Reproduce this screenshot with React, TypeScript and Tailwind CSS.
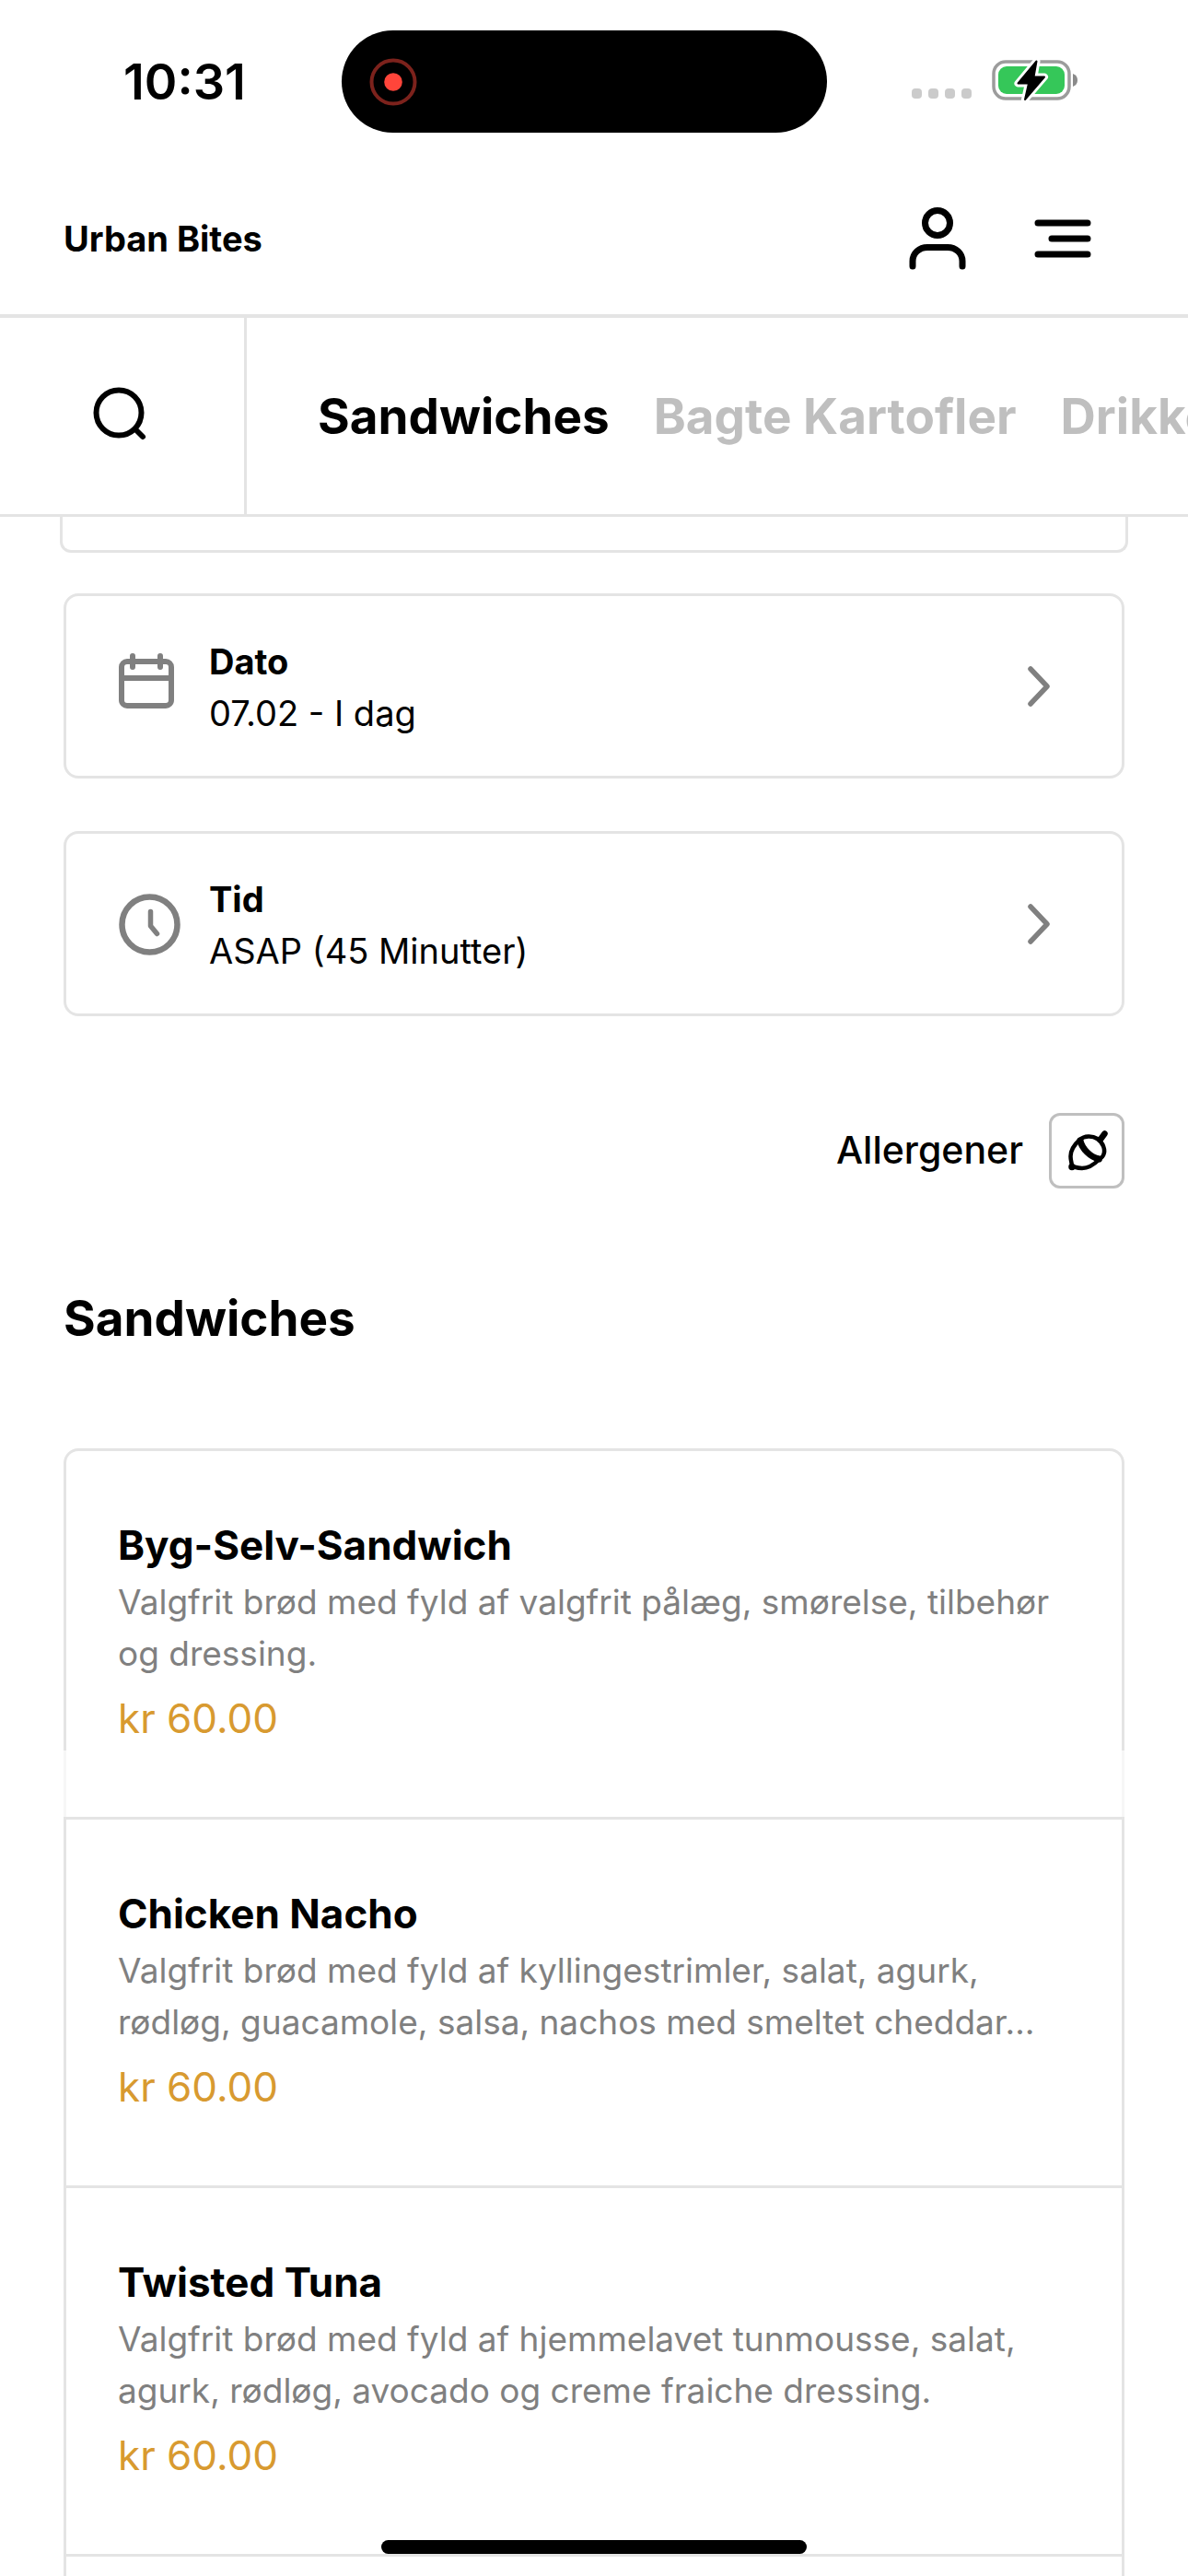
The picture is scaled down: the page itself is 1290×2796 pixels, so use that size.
import type { ReactNode } from 'react';
import { useState } from 'react';

const categories = ['Sandwiches', 'Bagte Kartofler', 'Drikke'];

const items = [
  { name: 'Byg-Selv-Sandwich', description: 'Valgfrit brød med fyld af valgfrit pålæg, smørelse, tilbehør og dressing.', price: 'kr 60.00' },
  { name: 'Chicken Nacho', description: 'Valgfrit brød med fyld af kyllingestrimler, salat, agurk, rødløg, guacamole, salsa, nachos med smeltet cheddar…', price: 'kr 60.00' },
  { name: 'Twisted Tuna', description: 'Valgfrit brød med fyld af hjemmelavet tunmousse, salat, agurk, rødløg, avocado og creme fraiche dressing.', price: 'kr 60.00' },
];

function BatteryIcon() {
  return (
    <svg className="h-12 w-[94px]" viewBox="0 0 94 48" fill="none">
      <rect x="2" y="4" width="82" height="40" rx="13" stroke="#9c9c9c" strokeWidth="3.5" />
      <path d="M88 17c3.6 1.2 5 3.8 5 7s-1.4 5.8-5 7z" fill="#8a8a8a" />
      <rect x="7" y="9" width="72" height="30" rx="9" fill="#35c759" />
      <path d="M48.5 3.5 28.5 27.5H40L36 45 57 20.5H45.5Z" stroke="#fff" strokeWidth="8" strokeLinejoin="round" />
      <path d="M48.5 3.5 28.5 27.5H40L36 45 57 20.5H45.5Z" fill="#000" stroke="#000" strokeWidth="2" strokeLinejoin="round" />
    </svg>
  );
}

function StatusBar() {
  return (
    <div className="relative flex h-[177px] shrink-0 items-center justify-between pr-[119px] pl-[134px]">
      <time className="text-[54px] leading-none font-semibold">10:31</time>
      <div className="absolute top-[33px] left-[371px] flex h-[111px] w-[527px] items-center rounded-full bg-black pl-[30px]">
        <svg className="size-[52px]" viewBox="0 0 52 52" fill="none">
          <circle cx="26" cy="26" r="23.5" stroke="#7c221c" strokeWidth="4" />
          <circle cx="26" cy="26" r="9.8" fill="#ff453a" />
        </svg>
      </div>
      <div className="flex items-center gap-[22px] pb-1">
        <div className="mt-[30px] flex gap-[7px]">
          {[0, 1, 2, 3].map((dot) => <span key={dot} className="size-[11px] rounded-[4px] bg-[#cbcbcb]" />)}
        </div>
        <BatteryIcon />
      </div>
    </div>
  );
}

function UserIcon() {
  return (
    <svg className="h-[68px] w-[62px]" viewBox="0 0 62 68" fill="none" stroke="currentColor" strokeWidth="7" strokeLinecap="round">
      <circle cx="31" cy="17" r="13.5" />
      <path d="M4 64v-5.500C4 50 11 43.500 20 43.500h22c9 0 16 6.500 16 15V64" />
    </svg>
  );
}

function MenuIcon() {
  return (
    <svg className="h-[42px] w-[62px]" viewBox="0 0 62 42" fill="none" stroke="currentColor" strokeWidth="7" strokeLinecap="round">
      <path d="M4 4h54M19 21h39M4 38h54" />
    </svg>
  );
}

function SearchIcon() {
  return (
    <svg className="size-[60px]" viewBox="0 0 60 60" fill="none" stroke="currentColor" strokeWidth="6" strokeLinecap="round">
      <circle cx="29" cy="29" r="24.5" />
      <path d="m47 47 8 8" />
    </svg>
  );
}

function CalendarIcon() {
  return (
    <svg className="mb-3 size-[62px]" viewBox="0 0 62 62" fill="none" stroke="currentColor" strokeWidth="6" strokeLinecap="round">
      <rect x="4" y="10" width="54" height="48" rx="6" />
      <path d="M4 28h54M16 4v12M46 4v12" />
    </svg>
  );
}

function ClockIcon() {
  return (
    <svg className="size-[68px]" viewBox="0 0 68 68" fill="none" stroke="currentColor" strokeWidth="6.5" strokeLinecap="round" strokeLinejoin="round">
      <circle cx="34.5" cy="34.5" r="30" />
      <path d="M35.500 20.500v15.500l7 8.500" strokeWidth="5.5" />
    </svg>
  );
}

function ChevronIcon() {
  return (
    <svg className="h-11 w-6 text-[#808080]" viewBox="0 0 24 44" fill="none" stroke="currentColor" strokeWidth="5.5" strokeLinecap="round" strokeLinejoin="round">
      <path d="m3 3 18 19L3 41" />
    </svg>
  );
}

function NutIcon() {
  return (
    <svg className="size-[46px]" viewBox="0 0 46 46" fill="none" stroke="currentColor" strokeWidth="4.5" strokeLinecap="round" strokeLinejoin="round">
      <path d="M7 40C7 36 5.500 34 5.500 29c0-7 4.500-13 10-18 5-4.500 13.500-4.500 19-1 6 4 9.500 12 6.500 18-1 2.500-3 3.500-4.500 4.500C32 37 25 42 18 42c-4 0-7-1-11-2z" />
      <path d="M16 12c2 9 11 18 20.500 20" strokeWidth="7" />
      <path d="m38.500 10 4-5.500" strokeWidth="6.5" />
      <circle cx="7" cy="40.500" r="1.500" />
    </svg>
  );
}

function OptionRow({ icon, label, value }: { icon: ReactNode; label: string; value: string }) {
  return (
    <button type="button" className="flex h-[201px] w-full items-center rounded-2xl border-3 border-[#e4e4e4] pr-[78px] pl-14 text-left">
      <span className="w-[99px] shrink-0 text-[#808080]">{icon}</span>
      <span className="flex flex-1 flex-col pt-0.5 text-[38px] leading-14">
        <span className="font-bold">{label}</span>
        <span>{value}</span>
      </span>
      <ChevronIcon />
    </button>
  );
}

export default function App() {
  const [active, setActive] = useState('Sandwiches');

  return (
    <div className="relative flex h-screen flex-col overflow-hidden bg-white font-['Inter',sans-serif] text-black">
      <StatusBar />

      <header className="flex h-[168px] shrink-0 items-center justify-between border-b-4 border-[#e4e4e4] pr-[105px] pl-[69px]">
        <a href="#" className="text-[38px] font-bold">Urban Bites</a>
        <div className="flex items-center gap-[74px]">
          <button type="button" aria-label="Profil"><UserIcon /></button>
          <button type="button" aria-label="Menu"><MenuIcon /></button>
        </div>
      </header>

      <nav className="flex h-[216px] shrink-0 border-b-3 border-[#e4e4e4]">
        <button type="button" aria-label="Søg" className="flex w-[268px] shrink-0 items-center justify-center border-r-3 border-[#e4e4e4] pr-1.5 pb-1.5">
          <SearchIcon />
        </button>
        <div className="flex flex-1 items-center gap-12 overflow-hidden pt-0.5 pl-[77px] text-[53px] font-bold whitespace-nowrap">
          {categories.map((category) => (
            <button key={category} type="button" onClick={() => setActive(category)} className={category === active ? 'text-black' : 'text-[#bfbfbf]'}>
              {category}
            </button>
          ))}
        </div>
      </nav>

      <main className="min-h-0 flex-1 overflow-hidden px-[69px]">
        <div className="-mx-1 h-[39px] rounded-b-xl border-3 border-t-0 border-[#e4e4e4]" />

        <div className="mt-11 flex flex-col gap-[57px]">
          <OptionRow icon={<CalendarIcon />} label="Dato" value="07.02 - I dag" />
          <OptionRow icon={<ClockIcon />} label="Tid" value="ASAP (45 Minutter)" />
        </div>

        <div className="mt-[105px] flex items-center justify-end gap-7">
          <label htmlFor="allergens" className="text-[41px] font-medium">Allergener</label>
          <button id="allergens" type="button" className="flex size-[82px] items-center justify-center rounded-xl border-3 border-[#bfbfbf]">
            <NutIcon />
          </button>
        </div>

        <h2 className="mt-[101px] text-[53px] leading-[80px] font-bold">Sandwiches</h2>

        <ul className="mt-[101px] rounded-t-2xl border-3 border-b-0 border-[#e4e4e4]">
          {items.map((item, index) => (
            <li key={item.name} className="relative h-[400px] border-b-3 border-[#e4e4e4] px-14 pt-[72px]">
              <h3 className="text-[44px] leading-[60px] font-bold">{item.name}</h3>
              <p className="mt-1 line-clamp-2 text-[37px] leading-14 text-[#808080]">{item.description}</p>
              <p className="mt-3 text-[44px] leading-[60px] text-[#d89a30]">{item.price}</p>
              {/* side borders fade out under the first item */}
              {index === 0 && <span className="absolute -inset-x-[3px] bottom-0 h-[72px] border-x-3 border-[#f7f7f7]" />}
            </li>
          ))}
          <li className="h-[400px]" />
        </ul>
      </main>

      <div className="absolute bottom-6 left-1/2 h-[15px] w-[462px] -translate-x-1/2 rounded-full bg-black" />
    </div>
  );
}
